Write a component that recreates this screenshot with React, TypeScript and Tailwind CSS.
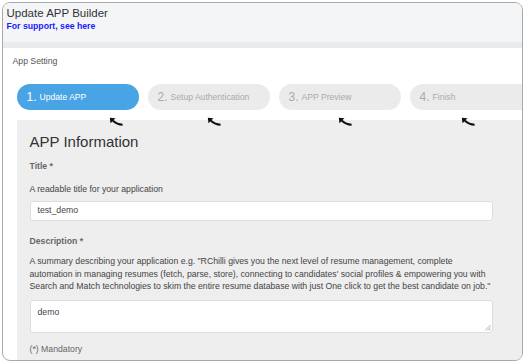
const steps = [
  { n: '1.', label: 'Update APP', active: true },
  { n: '2.', label: 'Setup Authentication', active: false },
  { n: '3.', label: 'APP Preview', active: false },
  { n: '4.', label: 'Finish', active: false },
];

// spacing of the little pointer arrows under the steps (relative to the panel)
const arrowLefts = ['ml-[92px]', 'ml-[84px]', 'ml-[117px]', 'ml-[109px]'];

function Arrow({ className }: { className?: string }) {
  return (
    <svg width="14" height="10" viewBox="0 0 14 10" className={className}>
      <path d="M0.8 0.8 L6.5 1.3 L4.6 3 C7.2 5.4 10.2 6.4 13.6 6.7 L13.6 8.7 C9.6 8.5 6.1 7.1 3.3 4.4 L1.5 6.3 Z" fill="#111" />
    </svg>
  );
}

export default function App() {
  return (
    <div className="w-[524px] h-[362px] bg-white p-[1.5px] font-[family-name:Liberation_Sans,Arial,sans-serif] overflow-hidden">
      <div className="h-[359px] w-[521px] rounded-[8px] border border-[#a9a9a9] overflow-hidden flex flex-col">
        {/* Header */}
        <div className="h-[39px] bg-[#f4f5f7] px-[4px] pt-[3px] shrink-0">
          <div className="text-[11.5px] leading-[14px] text-[#333]">Update APP Builder</div>
          <div className="text-[8.7px] leading-[12px] font-bold text-[#1a1aff]">For support, see here</div>
        </div>
        <div className="h-[6px] bg-[#e9ebee] shrink-0" />

        {/* Body */}
        <div className="flex-1 flex flex-col">
          <div className="pl-[10px] pt-[7px] text-[8.7px] leading-[12px] text-[#555]">App Setting</div>

          {/* Steps */}
          <div className="flex gap-[9px] pl-[14px] mt-[17px] shrink-0">
            {steps.map((s) => (
              <div
                key={s.n}
                className={
                  s.active
                    ? 'w-[122px] h-[26px] shrink-0 rounded-full bg-[#49a4e6] flex items-center pl-[10px] text-white'
                    : 'w-[122px] h-[26px] shrink-0 rounded-full bg-[#ebebeb] flex items-center pl-[10px] text-[#aaa]'
                }
              >
                <span className="text-[12px] leading-none">{s.n}</span>
                <span className="text-[8.6px] leading-none ml-[3px] mt-[1px]">{s.label}</span>
              </div>
            ))}
          </div>

          {/* Panel */}
          <div className="ml-[14px] mt-[10px] flex-1 bg-[#eeeeee] relative px-[13px] pt-[13px]">
            <div className="absolute -top-[3px] left-0 flex">
              {arrowLefts.map((m, i) => (
                <Arrow key={i} className={m} />
              ))}
            </div>

            <h2 className="text-[15px] leading-[18px] text-[#333]">APP Information</h2>

            {/* Title */}
            <div className="mt-[9px] text-[8.7px] leading-[12px] font-bold text-[#666]">Title *</div>
            <div className="mt-[11px] text-[8.7px] leading-[12.5px] text-[#444]">A readable title for your application</div>
            <div className="mt-[6px] w-[463px] h-[20px] bg-white border border-[#dddddd] rounded-[3px] px-[7px] flex items-center text-[8.7px] text-[#444]">
              test_demo
            </div>

            {/* Description */}
            <div className="mt-[14px] text-[8.7px] leading-[12px] font-bold text-[#666]">Description *</div>
            <div className="mt-[8px] text-[8.7px] leading-[12.5px] text-[#444] whitespace-nowrap">
              A summary describing your application e.g. "RChilli gives you the next level of resume management, complete
              <br />
              automation in managing resumes (fetch, parse, store), connecting to candidates' social profiles &amp; empowering you with
              <br />
              Search and Match technologies to skim the entire resume database with just One click to get the best candidate on job."
            </div>
            <div className="mt-[7px] w-[463px] h-[33px] bg-white border border-[#dddddd] rounded-[3px] px-[7px] pt-[5px] text-[8.7px] leading-[12px] text-[#444] relative">
              demo
              <svg width="7" height="7" viewBox="0 0 7 7" className="absolute right-[1px] bottom-[1px]">
                <path d="M6.5 1 L1 6.5 M6.5 3.5 L3.5 6.5 M6.5 5.5 L5.5 6.5" stroke="#999" strokeWidth="0.8" />
              </svg>
            </div>

            <div className="mt-[10px] text-[8.7px] leading-[12px] text-[#666]">(*) Mandatory</div>
          </div>
        </div>
      </div>
    </div>
  );
}
